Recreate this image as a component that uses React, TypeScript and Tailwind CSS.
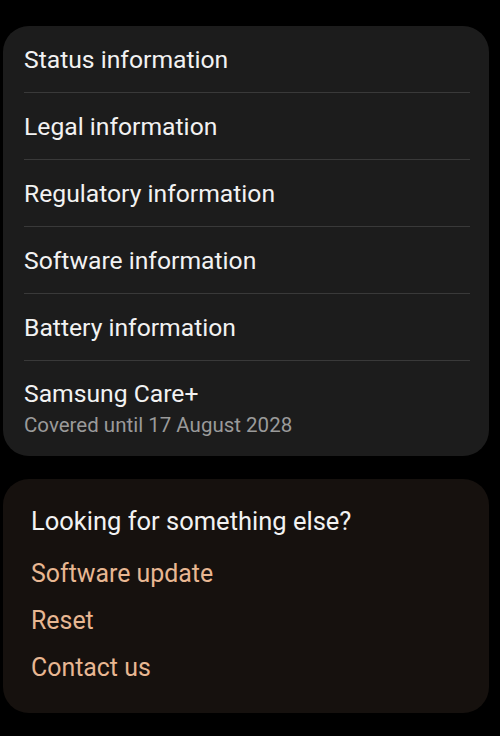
const rows = [
  'Status information',
  'Legal information',
  'Regulatory information',
  'Software information',
  'Battery information',
];

const links = ['Software update', 'Reset', 'Contact us'];

export default function App() {
  return (
    <div
      className="min-h-[736px] w-[500px] bg-black pt-[26px] pl-[3px] pr-[11px]"
      style={{ fontFamily: 'Roboto, "Noto Sans", sans-serif' }}
    >
      <div className="rounded-[26px] bg-[#1c1c1c] pl-[21px] pr-[19px]">
        {rows.map((r) => (
          <div key={r} className="flex h-[67px] items-center border-b border-[#393939] pt-[2px]">
            <span className="text-[24.7px] text-[#f2f2f2]">{r}</span>
          </div>
        ))}
        <div className="flex h-[95px] flex-col justify-center">
          <span className="text-[24.7px] leading-[32px] text-[#f2f2f2]">Samsung Care+</span>
          <span className="text-[20.5px] leading-[30px] text-[#9a9a9a]">Covered until 17 August 2028</span>
        </div>
      </div>

      <div className="mt-[23px] h-[234px] rounded-[26px] bg-[#16110e] px-[28px] pt-[24px]">
        <div className="text-[25.5px] leading-[36px] text-[#f2f2f2]">Looking for something else?</div>
        <div className="mt-[15px] flex flex-col">
          {links.map((l) => (
            <a key={l} href="#" className="h-[47px] text-[24.9px] leading-[40px] text-[#e8b792]">
              {l}
            </a>
          ))}
        </div>
      </div>
    </div>
  );
}
